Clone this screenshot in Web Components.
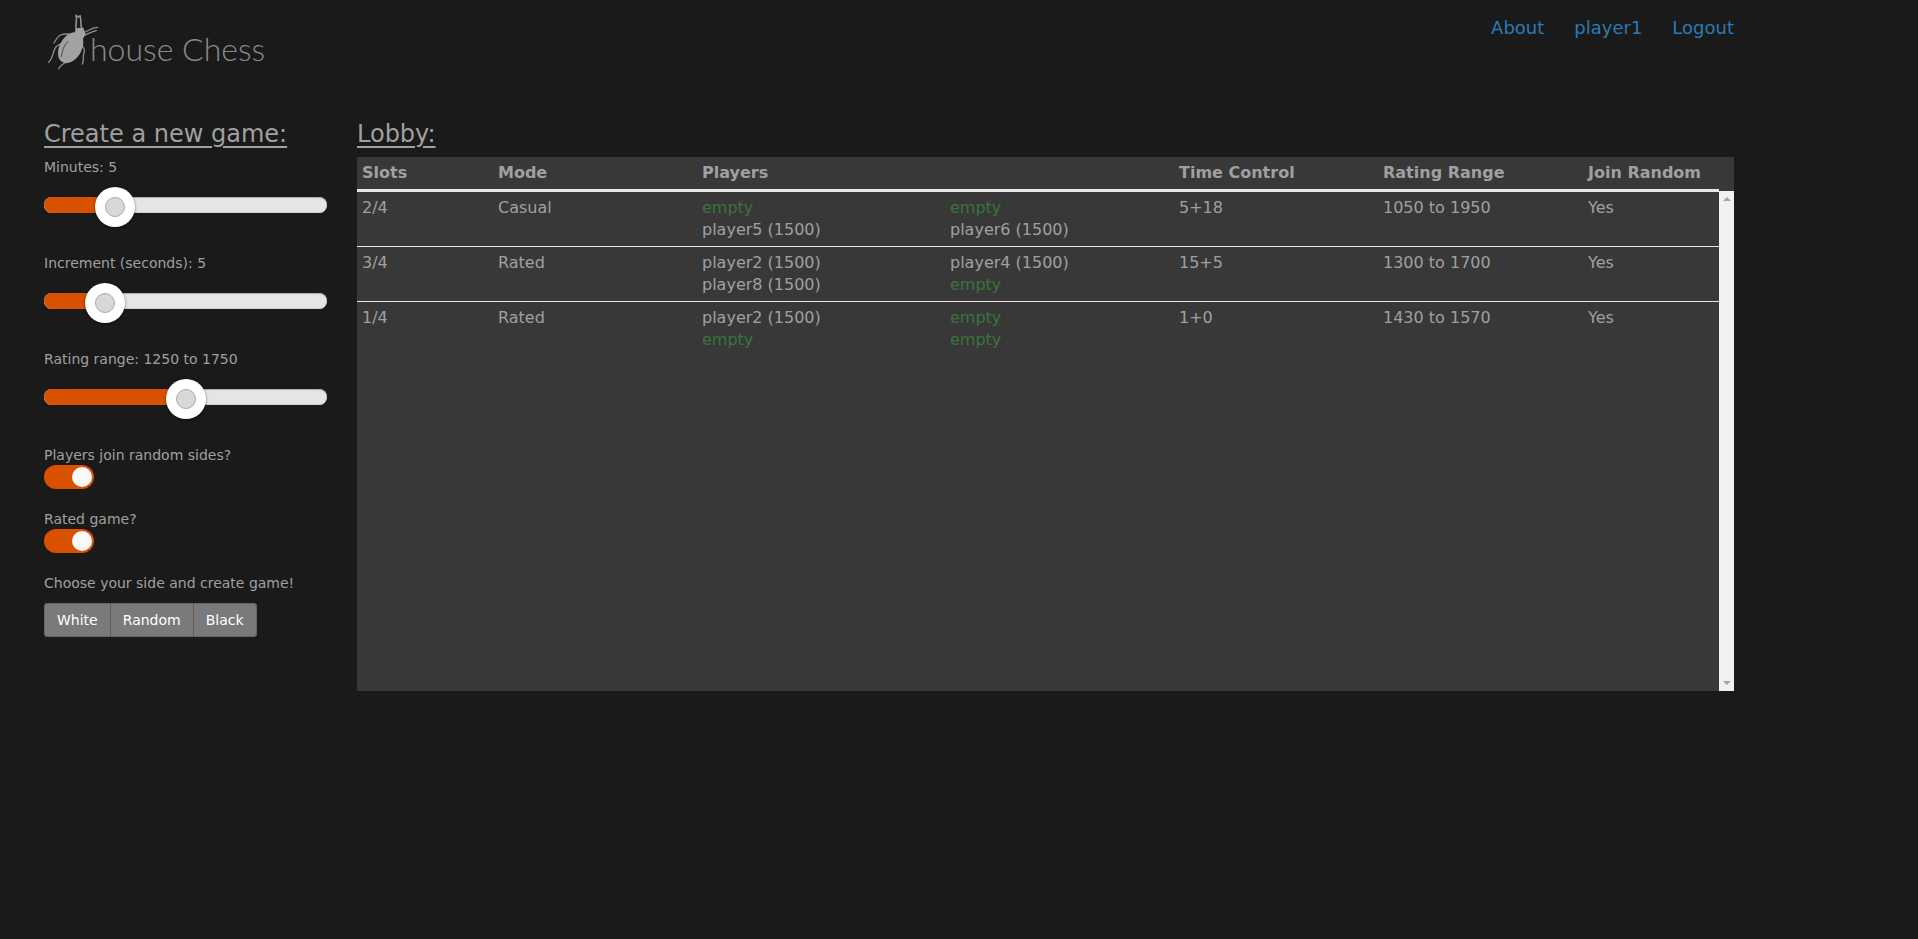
<!DOCTYPE html>
<html>
<head>
<meta charset="utf-8">
<title>Bughouse Chess</title>
<style>
    html, body {
        margin: 0;
        background: #1a1a1a;
        color: #a0a0a0;
        font-family: "DejaVu Sans", sans-serif;
    }
</style>
</head>
<body>
<chess-page>
    <site-header slot="top">
        <a slot="nav">About</a>
        <a slot="nav">player1</a>
        <a slot="nav">Logout</a>
    </site-header>
    <create-panel slot="side">
        <range-field label="Minutes: 5" at="79"></range-field>
        <range-field label="Increment (seconds): 5" at="69"></range-field>
        <range-field label="Rating range: 1250 to 1750" at="150"></range-field>
        <toggle-field label="Players join random sides?"></toggle-field>
        <toggle-field label="Rated game?"></toggle-field>
        <side-buttons label="Choose your side and create game!"></side-buttons>
    </create-panel>
    <lobby-table slot="main">
        <lobby-row slots="2/4" mode="Casual" a="empty|player5 (1500)" b="empty|player6 (1500)" time="5+18" range="1050 to 1950" random="Yes"></lobby-row>
        <lobby-row slots="3/4" mode="Rated" a="player2 (1500)|player8 (1500)" b="player4 (1500)|empty" time="15+5" range="1300 to 1700" random="Yes"></lobby-row>
        <lobby-row slots="1/4" mode="Rated" a="player2 (1500)|empty" b="empty|empty" time="1+0" range="1430 to 1570" random="Yes" last></lobby-row>
    </lobby-table>
</chess-page>

<script>
class ChessPage extends HTMLElement {
    constructor() {
        super();
        this.attachShadow({mode: 'open'});
        this.shadowRoot.innerHTML = `
            <style>
                :host {
                    display: block;
                    width: 1690px;
                    margin-left: 44px;
                    min-height: 939px;
                }
                #columns {
                    display: flex;
                    gap: 30px;
                }
                #side {
                    flex: 0 0 283px;
                }
                #main {
                    flex: 1;
                    min-width: 0;
                }
            </style>
            <slot name="top"></slot>
            <div id="columns">
                <div id="side"><slot name="side"></slot></div>
                <div id="main"><slot name="main"></slot></div>
            </div>
        `;
    }
}

class SiteHeader extends HTMLElement {
    constructor() {
        super();
        this.attachShadow({mode: 'open'});
        this.shadowRoot.innerHTML = `
            <style>
                :host {
                    display: flex;
                    justify-content: space-between;
                    align-items: flex-start;
                    height: 115px;
                }
                #logo {
                    display: flex;
                    margin-left: -4px;
                    height: 75px;
                    margin-top: 5px;
                }
                svg {
                    flex: none;
                    overflow: visible;
                }
                #name {
                    font: 300 32px/1 Lato, sans-serif;
                    color: #8a8a8a;
                    margin-top: 28px;
                    white-space: nowrap;
                }
                nav {
                    display: flex;
                    gap: 30px;
                    padding-top: 16px;
                    font-size: 18px;
                    line-height: 24px;
                }
                ::slotted(a) {
                    color: #2c7ab5;
                }
            </style>
            <div id="logo">
                <svg width="50" height="70" viewBox="0 0 150 210">
                    <g fill="none" stroke="#8f8f8f" stroke-width="4" stroke-linecap="round" stroke-linejoin="round">
                        <path d="M109 74 C104 60 113 50 108 31 L116 36 M120 32 C125 46 120 56 125 70" stroke-width="5"/>
                        <path d="M130 82 C145 80 150 68 173 67 M134 90 C146 86 154 80 169 77"/>
                        <path d="M100 90 C84 86 72 86 62 90 C52 94 48 104 42 114"/>
                        <path d="M74 112 C60 116 50 120 45 130 C38 144 38 160 26 172"/>
                        <path d="M78 170 C72 178 60 180 56 191"/>
                        <path d="M118 118 C133 124 135 136 131 148 C128 156 133 166 127 177"/>
                    </g>
                    <path fill="#a2a2a2" d="M108 70 L130 68 L137 88 L126 106 L100 96 Z"/>
                    <ellipse cx="92" cy="128" rx="33" ry="50" transform="rotate(30 92 128)" fill="#a2a2a2"/>
                    <path fill="none" stroke="#4a4a4a" stroke-width="3" d="M84 108 C72 120 66 138 64 156"/>
                </svg>
                <div id="name">house Chess</div>
            </div>
            <nav><slot name="nav"></slot></nav>
        `;
    }
}

class CreatePanel extends HTMLElement {
    constructor() {
        super();
        this.attachShadow({mode: 'open'});
        this.shadowRoot.innerHTML = `
            <style>
                :host {
                    display: block;
                }
                h2 {
                    margin: 0;
                    font-size: 24px;
                    font-weight: normal;
                    line-height: 38px;
                    padding-bottom: 4px;
                    text-decoration: underline;
                    text-underline-offset: 4px;
                }
            </style>
            <h2>Create a new game:</h2>
            <slot></slot>
        `;
    }
}

class RangeField extends HTMLElement {
    constructor() {
        super();
        this.attachShadow({mode: 'open'});
        const at = this.getAttribute('at');
        this.shadowRoot.innerHTML = `
            <style>
                :host {
                    display: block;
                    margin-bottom: 16px;
                }
                label {
                    display: block;
                    font-size: 14px;
                    line-height: 20px;
                }
                #box {
                    position: relative;
                    height: 60px;
                    padding-top: 20px;
                    box-sizing: border-box;
                }
                #track {
                    width: 100%;
                    height: 16px;
                    border-radius: 8px;
                    background: #e5e5e5;
                    box-shadow: inset 0 1px 1px #aaa, inset 0 -1px 0 #ccc;
                    overflow: hidden;
                }
                #fill {
                    height: 100%;
                    background: #d95000;
                }
                #thumb {
                    position: absolute;
                    top: 10px;
                    width: 40px;
                    height: 40px;
                    margin-left: -20px;
                    box-sizing: border-box;
                    border-radius: 50%;
                    background: #fff;
                    box-shadow: 0 1px 3px rgba(0,0,0,0.5);
                    display: flex;
                    align-items: center;
                    justify-content: center;
                }
                #thumb i {
                    width: 20px;
                    height: 20px;
                    box-sizing: border-box;
                    border-radius: 50%;
                    background: #d8d8d8;
                    border: 1px solid #aaa;
                }
            </style>
            <label>${this.getAttribute('label')}</label>
            <div id="box">
                <div id="track"><div id="fill" style="width: ${at}px"></div></div>
                <div id="thumb" style="left: ${at - 8}px"><i></i></div>
            </div>
        `;
    }
}

class ToggleField extends HTMLElement {
    constructor() {
        super();
        this.attachShadow({mode: 'open'});
        this.shadowRoot.innerHTML = `
            <style>
                :host {
                    display: block;
                    margin-bottom: 20px;
                }
                label {
                    display: block;
                    font-size: 14px;
                    line-height: 20px;
                }
                #switch {
                    width: 50px;
                    height: 24px;
                    box-sizing: border-box;
                    padding: 2px 2px 2px 28px;
                    border-radius: 12px;
                    background: #d95000;
                }
                #switch i {
                    display: block;
                    width: 20px;
                    height: 20px;
                    border-radius: 50%;
                    background: #fafafa;
                }
            </style>
            <label>${this.getAttribute('label')}</label>
            <div id="switch"><i></i></div>
        `;
    }
}

class SideButtons extends HTMLElement {
    constructor() {
        super();
        this.attachShadow({mode: 'open'});
        this.shadowRoot.innerHTML = `
            <style>
                :host {
                    display: block;
                }
                label {
                    display: block;
                    font-size: 14px;
                    line-height: 20px;
                    margin-bottom: 10px;
                }
                #group {
                    display: inline-flex;
                    height: 34px;
                    border-radius: 4px;
                    overflow: hidden;
                    background: #7a7a7a;
                    box-shadow: inset 0 0 0 1px #666;
                }
                span {
                    padding: 0 12px;
                    font-size: 14px;
                    line-height: 34px;
                    color: #fff;
                    border-left: 1px solid #5c5c5c;
                }
                span:first-child {
                    border-left: 0;
                    padding: 0 12px 0 13px;
                }
                span:last-child {
                    padding-right: 13px;
                }
            </style>
            <label>${this.getAttribute('label')}</label>
            <div id="group"><span>White</span><span>Random</span><span>Black</span></div>
        `;
    }
}

class LobbyTable extends HTMLElement {
    constructor() {
        super();
        this.attachShadow({mode: 'open'});
        this.shadowRoot.innerHTML = `
            <style>
                :host {
                    display: block;
                }
                h2 {
                    margin: 0;
                    font-size: 24px;
                    font-weight: normal;
                    line-height: 38px;
                    padding-bottom: 4px;
                    text-decoration: underline;
                    text-underline-offset: 4px;
                }
                #table {
                    height: 534px;
                    background: #383838;
                    display: flex;
                    flex-direction: column;
                }
                #head {
                    display: grid;
                    grid-template-columns: 136px 204px 477px 204px 205px 1fr;
                    padding-left: 5px;
                    height: 32px;
                    line-height: 32px;
                    font-weight: bold;
                    font-size: 16px;
                }
                #body {
                    flex: 1;
                    display: flex;
                    min-height: 0;
                }
                #rows {
                    flex: 1;
                    border-top: 3px solid #e6e6e6;
                }
                #bar {
                    flex: 0 0 15px;
                    margin-top: 2px;
                    background: #f1f1f1;
                    display: flex;
                    flex-direction: column;
                    justify-content: space-between;
                    align-items: center;
                    padding: 6px 0;
                    box-sizing: border-box;
                }
                #bar i {
                    width: 0;
                    height: 0;
                    border-left: 4px solid transparent;
                    border-right: 4px solid transparent;
                }
                #up { border-bottom: 4px solid #a3a3a3; }
                #down { border-top: 4px solid #a3a3a3; }
            </style>
            <h2>Lobby:</h2>
            <div id="table">
                <div id="head">
                    <span>Slots</span><span>Mode</span><span>Players</span><span>Time Control</span><span>Rating Range</span><span>Join Random</span>
                </div>
                <div id="body">
                    <div id="rows"><slot></slot></div>
                    <div id="bar"><i id="up"></i><i id="down"></i></div>
                </div>
            </div>
        `;
    }
}

class LobbyRow extends HTMLElement {
    constructor() {
        super();
        this.attachShadow({mode: 'open'});
        const get = (name) => this.getAttribute(name);
        const players = (list) => list.split('|').map((p) =>
            p === 'empty' ? `<div class="free">empty</div>` : `<div>${p}</div>`).join('');
        this.shadowRoot.innerHTML = `
            <style>
                :host {
                    display: grid;
                    grid-template-columns: 136px 204px 248px 229px 204px 205px 1fr;
                    padding: 5px 0 5px 5px;
                    font-size: 16px;
                    line-height: 22px;
                    border-bottom: 1px solid #e6e6e6;
                }
                :host([last]) {
                    border-bottom: 0;
                }
                .free {
                    color: #3a743a;
                }
            </style>
            <div>${get('slots')}</div>
            <div>${get('mode')}</div>
            <div>${players(get('a'))}</div>
            <div>${players(get('b'))}</div>
            <div>${get('time')}</div>
            <div>${get('range')}</div>
            <div>${get('random')}</div>
        `;
    }
}

customElements.define('chess-page', ChessPage);
customElements.define('site-header', SiteHeader);
customElements.define('create-panel', CreatePanel);
customElements.define('range-field', RangeField);
customElements.define('toggle-field', ToggleField);
customElements.define('side-buttons', SideButtons);
customElements.define('lobby-table', LobbyTable);
customElements.define('lobby-row', LobbyRow);
</script>
</body>
</html>
